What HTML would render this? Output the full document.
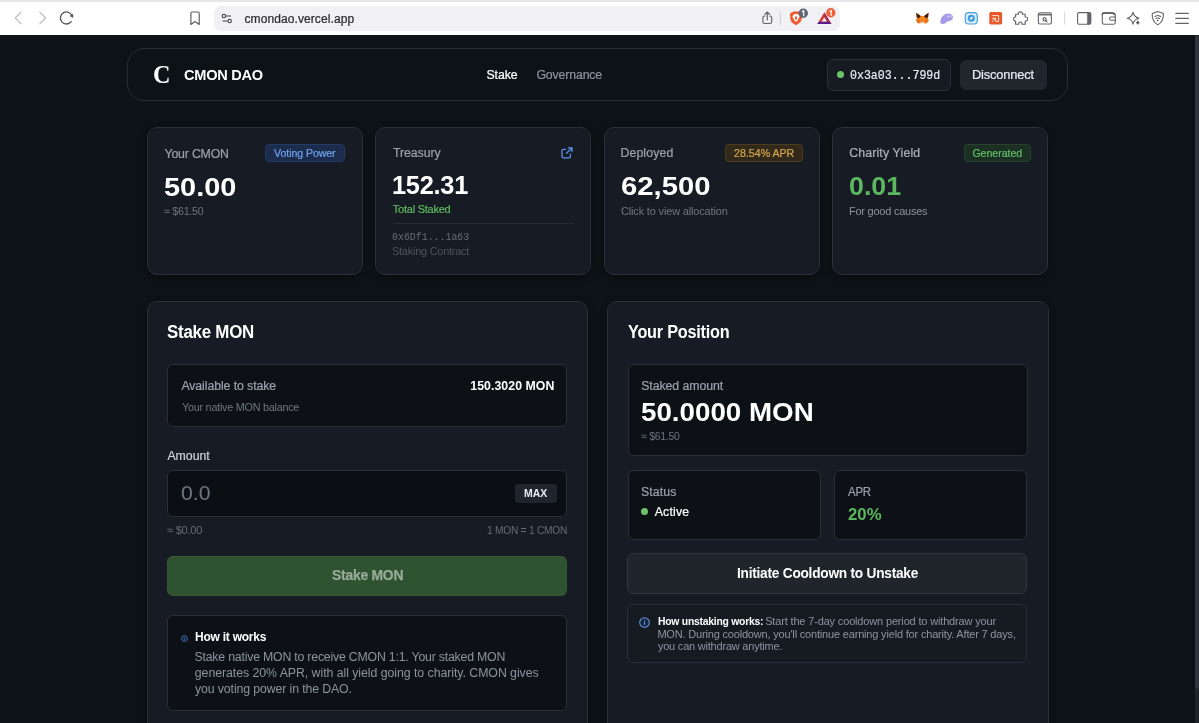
<!DOCTYPE html>
<html>
<head>
<meta charset="utf-8">
<title>CMON DAO</title>
<style>
*{box-sizing:border-box;margin:0;padding:0}
html,body{width:1199px;height:723px;overflow:hidden;background:#0d1216;font-family:"Liberation Sans",sans-serif;}
body{position:relative;color:#fff}
.abs{position:absolute}
.t{position:absolute;white-space:nowrap;line-height:1}
.mono{font-family:"Liberation Mono",monospace}
.serif{font-family:"Liberation Serif",serif}
.b{font-weight:bold}
.m{-webkit-text-stroke:0.22px currentColor}
/* browser chrome */
#chrome{position:absolute;left:0;top:0;width:1199px;height:35px;background:#fff}
#topstrip{position:absolute;left:0;top:0;width:1199px;height:2px;background:#e6e6ea}
#urlbar{position:absolute;left:214px;top:6px;width:626px;height:25px;border-radius:7px;background:#f0f0f5}
#chrome svg{position:absolute;overflow:visible}
/* nav */
#nav{position:absolute;left:127px;top:48.4px;width:941px;height:52.8px;border:1px solid #282d35;border-radius:17px;background:#0d1216}
.card{position:absolute;top:127px;width:216px;height:147.6px;background:#171b23;border:1px solid #2a2f38;border-radius:10px;box-shadow:0 2px 6px rgba(0,0,0,0.35)}
.panel{position:absolute;top:300.6px;width:442px;height:440px;background:#171b23;border:1px solid #2a2f38;border-radius:10px;box-shadow:0 2px 6px rgba(0,0,0,0.35)}
.box{position:absolute;background:#0d1116;border:1px solid #292e37;border-radius:6px}
.badge{position:absolute;height:18px;border-radius:4px;font-size:11px;line-height:16px;text-align:center;white-space:nowrap}
</style>
</head>
<body>
<div id="root" style="position:absolute;left:0;top:0;width:1199px;height:723px;will-change:transform">
<!-- ================= BROWSER CHROME ================= -->
<div id="chrome">
  <div id="topstrip"></div>
  <div id="urlbar"></div>
  <div class="t m" id="url" style="left:244.5px;top:11.6px;font-size:12px;line-height:15px;color:#2b2b2f;letter-spacing:0;letter-spacing:0.09px">cmondao.vercel.app</div>
  <svg id="chromeIcons" style="left:0;top:0" width="1199" height="35" viewBox="0 0 1199 35" fill="none" stroke-linecap="round" stroke-linejoin="round">
  <!-- back / forward -->
  <path d="M21 12.2 L15.2 18 L21 23.8" stroke="#c3c3c6" stroke-width="1.3"/>
  <path d="M39.8 12.2 L45.6 18 L39.8 23.8" stroke="#c3c3c6" stroke-width="1.3"/>
  <!-- reload -->
  <path d="M72.2 16.4 A6 6 0 1 0 71.2 21.6" stroke="#55565b" stroke-width="1.3"/>
  <path d="M70.3 15.8 L72.9 14.2 L72.9 17.3 Z" fill="#55565b" stroke="#55565b" stroke-width="0.6"/>
  <!-- bookmark -->
  <path d="M190.9 13.2 Q190.9 12 192.1 12 L198 12 Q199.2 12 199.2 13.2 L199.2 24.4 L195.05 21.6 L190.9 24.4 Z" stroke="#5a5b60" stroke-width="1.15"/>
  <!-- tune -->
  <circle cx="223.9" cy="16" r="1.7" stroke="#3a3a3f" stroke-width="1.05"/>
  <path d="M226.4 16 H230.6" stroke="#3a3a3f" stroke-width="1.1"/>
  <circle cx="229.7" cy="21" r="1.7" stroke="#3a3a3f" stroke-width="1.05"/>
  <path d="M223 21 H227.2" stroke="#3a3a3f" stroke-width="1.1"/>
  <!-- share -->
  <path d="M765 16 H764.6 Q762.9 16 762.9 17.7 V21.8 Q762.9 23.5 764.6 23.5 H770 Q771.7 23.5 771.7 21.8 V17.7 Q771.7 16 770 16 H769.6" stroke="#636469" stroke-width="1.15"/>
  <path d="M767.3 20 V12.2 M764.9 14.4 L767.3 12 L769.7 14.4" stroke="#636469" stroke-width="1.15"/>
  <!-- separator -->
  <path d="M780.3 12.2 V24" stroke="#cfcfd4" stroke-width="1"/>
  <!-- brave lion -->
  <path d="M793.2 11.4 L798.8 11.4 L800 12.8 L801.4 12.6 L802.2 15 L801.6 16.4 L802 18 L800.4 22.2 L796 25.2 L791.6 22.2 L790 18 L790.4 16.4 L789.8 15 L790.6 12.6 L792 12.8 Z" fill="#f1562b" stroke="none"/>
  <path d="M793.6 14.4 L796 13.8 L798.4 14.4 L799.6 16.6 L798.2 19.4 L796 22.2 L793.8 19.4 L792.4 16.6 Z" fill="#fff" stroke="none"/>
  <path d="M796 15.6 L797.2 17.8 L796 21 L794.8 17.8 Z" fill="#f1562b" stroke="none"/>
  <circle cx="803.3" cy="13.2" r="4.7" fill="#5e6573" stroke="none"/>
  <path d="M802.4 11.6 L803.7 10.7 V15.8" stroke="#fff" stroke-width="1.2"/>
  <!-- BAT triangle -->
  <path d="M824.3 16.6 L827.6 22 L821 22 Z" fill="#fdf6f6" stroke="none"/>
  <path d="M824.3 12.2 L817.4 24 L831.4 24 Z M824.3 17.2 L827 21.7 L821.6 21.7 Z" fill="#d8372e" fill-rule="evenodd" stroke="none"/>
  <path d="M817.4 24 L831.4 24 L830 21.7 L818.8 21.7 Z" fill="#5a1d8c" stroke="none"/>
  <path d="M824.3 12.2 L831.4 24 L828.6 22.6 L824.3 16.4 Z" fill="#9c2a66" stroke="none"/>
  <circle cx="830.8" cy="12.8" r="4.7" fill="#ef5f38" stroke="none"/>
  <path d="M829.9 11.2 L831.2 10.3 V15.4" stroke="#fff" stroke-width="1.2"/>
  <!-- metamask fox -->
  <path d="M916.2 12.8 L920.6 16 L924.2 16 L928.6 12.8 L928 18.4 L928.6 21 L926.2 23.6 L922.4 22.8 L918.4 23.6 L916.2 21 L916.8 18.4 Z" fill="#f5841f" stroke="none"/>
  <path d="M916.2 12.8 L920.8 16 L919.2 18 L916.8 17.6 Z" fill="#3b1d12" stroke="none"/>
  <path d="M928.6 12.8 L924 16 L925.6 18 L928 17.6 Z" fill="#3b1d12" stroke="none"/>
  <path d="M920.4 21.6 L922.4 22.2 L924.4 21.6 L923.8 23.4 L921 23.4 Z" fill="#e4d4c8" stroke="none"/>
  <path d="M916.8 18.4 L919.6 19 L920.4 21.6 L918.4 23.6 L916.2 21 Z M928 18.4 L925.2 19 L924.4 21.6 L926.2 23.6 L928.6 21 Z" fill="#e2761b" stroke="none"/>
  <!-- purple ghost -->
  <path d="M940.3 22.8 C940 18 943.4 13.5 948.4 13.4 C951.4 13.4 953 15.2 953 17.3 C953 19.7 951 21 949 21 C947.6 21 946.8 22.2 945.6 23 C944 24.1 940.6 24.5 940.3 22.8 Z" fill="#a79ae6" stroke="none"/>
  <circle cx="948.4" cy="16.4" r="0.85" fill="#ece9fb" stroke="none"/>
  <circle cx="951" cy="16.2" r="0.75" fill="#ece9fb" stroke="none"/>
  <!-- blue rounded square -->
  <rect x="965.3" y="12.6" width="12" height="11.4" rx="3.2" fill="#d9ecf9" stroke="#4b9fdd" stroke-width="1.2"/>
  <circle cx="971.3" cy="18.3" r="3.5" fill="#3f9be0" stroke="none"/>
  <path d="M969.4 20 L970.6 17.6 L973.2 16.6 L972 19 Z" fill="#fff" stroke="none"/>
  <!-- orange square -->
  <rect x="989.3" y="12" width="12.8" height="12.4" rx="1.6" fill="#e8582a" stroke="none"/>
  <path d="M992.6 15.6 H998.6 V21.4 H995.6 V18.4 H992.4 M995.4 18.6 L992.2 21.6" stroke="#fbe3d9" stroke-width="1"/>
  <!-- puzzle -->
  <path d="M1018.4 14.2 Q1018.2 11.8 1020.4 11.8 Q1022.6 11.8 1022.4 14.2 L1025.2 14.2 L1025.2 17 Q1027.6 16.8 1027.6 19 Q1027.6 21.2 1025.2 21 L1025.2 24.2 L1022 24.2 Q1022.2 22 1020.4 22 Q1018.6 22 1018.8 24.2 L1015.6 24.2 L1015.6 21 Q1013.6 21.2 1013.6 19 Q1013.6 16.8 1015.6 17 L1015.6 14.2 Z" stroke="#636469" stroke-width="1.15"/>
  <!-- tab search -->
  <rect x="1038.4" y="12.8" width="13" height="11.2" rx="1.4" stroke="#6e6f75" stroke-width="1.2"/>
  <path d="M1038.4 14.8 H1051.4" stroke="#6e6f75" stroke-width="1.6"/>
  <circle cx="1044.6" cy="19.4" r="1.6" stroke="#4a4b50" stroke-width="1.1"/>
  <path d="M1045.8 20.6 L1047 21.8" stroke="#4a4b50" stroke-width="1.1"/>
  <!-- separator -->
  <path d="M1064.7 12.2 V24" stroke="#d4d4d8" stroke-width="1"/>
  <!-- sidebar -->
  <rect x="1077.6" y="12.6" width="13.2" height="11.6" rx="1.4" stroke="#636469" stroke-width="1.1"/>
  <path d="M1087.8 12.8 H1089.4 Q1090.6 12.8 1090.6 14 V22.8 Q1090.6 24 1089.4 24 H1087.8 Z" fill="#636469" stroke="#636469" stroke-width="0.8"/>
  <!-- wallet -->
  <path d="M1102.3 14.4 Q1102.3 12.8 1103.9 12.8 H1112.4 Q1114 12.8 1114 14.4" stroke="#6e6f75" stroke-width="1.6"/>
  <rect x="1102.3" y="13.4" width="13" height="10.8" rx="1.6" stroke="#636469" stroke-width="1.1"/>
  <path d="M1115.3 17 H1111 Q1109.6 17 1109.6 18.4 V18.8 Q1109.6 20.2 1111 20.2 H1115.3" stroke="#636469" stroke-width="1.1"/>
  <!-- sparkle (Leo) -->
  <path d="M1133 12.2 Q1134 17.2 1139 18.2 Q1134 19.2 1133 24.2 Q1132 19.2 1127.2 18.2 Q1132 17.2 1133 12.2 Z" stroke="#636469" stroke-width="1.1"/>
  <path d="M1137.8 20.8 Q1138.05 22.4 1139.6 22.7 Q1138.05 23 1137.8 24.6 Q1137.55 23 1136 22.7 Q1137.55 22.4 1137.8 20.8 Z" fill="#4a4b50" stroke="#4a4b50" stroke-width="0.4"/>
  <!-- vpn shield -->
  <path d="M1157.8 11.4 L1163.4 13.4 Q1163.8 21.6 1157.8 24.8 Q1151.8 21.6 1152.2 13.4 Z" stroke="#636469" stroke-width="1.1"/>
  <path d="M1154.8 16.4 Q1157.8 14.2 1160.8 16.4 M1155.8 18.4 Q1157.8 17 1159.8 18.4" stroke="#55565b" stroke-width="1"/>
  <circle cx="1157.8" cy="20.4" r="0.8" fill="#55565b" stroke="none"/>
  <!-- hamburger -->
  <path d="M1175.8 13.4 H1188.4 M1175.8 18.4 H1188.4 M1175.8 23.4 H1188.4" stroke="#636469" stroke-width="1.15"/>
</svg>
</div>

<!-- scrollbar -->
<div class="abs" id="sbTrack" style="left:1195px;top:35px;width:4px;height:688px;background:#1f232a"></div>
<div class="abs" id="sbThumb" style="left:1195px;top:35.5px;width:4px;height:653px;background:#31353d;border-radius:0 0 2px 2px"></div>
<!-- ================= NAV ================= -->
<div id="nav"></div>
<div class="t serif b" id="logoC" style="left:153px;top:61px;font-size:26px;line-height:27px;color:#fff;transform-origin:0 0;transform:scaleX(0.93)">C</div>
<div class="t b" id="brand" style="left:183.7px;top:66.0px;font-size:15px;line-height:18px;letter-spacing:-0.25px;transform-origin:0 0;transform:scaleX(0.9707)">CMON DAO</div>
<div class="t m" id="navStake" style="left:486.5px;top:68.0px;font-size:12.3px;line-height:15px;color:#fff;letter-spacing:-0.09px">Stake</div>
<div class="t m" id="navGov" style="left:536.4px;top:68.0px;font-size:12.3px;line-height:15px;color:#8b949e;letter-spacing:-0.13px">Governance</div>
<div class="abs" id="addrBox" style="left:827px;top:59px;width:124px;height:32px;border-radius:6px;background:#161b22;border:1px solid #2a3038"></div>
<div class="abs" id="addrDot" style="left:837px;top:71px;width:7px;height:7px;border-radius:50%;background:#6cc36c"></div>
<div class="t mono m" id="addr" style="left:850.0px;top:68.7px;font-size:13.4px;line-height:13px;color:#e6edf3;transform-origin:0 0;transform:scaleX(0.8639)">0x3a03...799d</div>
<div class="abs" id="discBtn" style="left:960px;top:60px;width:87px;height:30px;border-radius:6px;background:#21262d"></div>
<div class="t m" id="disc" style="left:971.9px;top:67.3px;font-size:12.8px;line-height:15px;color:#e6edf3;letter-spacing:-0.13px">Disconnect</div>

<!-- ================= STAT CARDS ================= -->
<div class="card" id="card1" style="left:147px"></div>
<div class="card" id="card2" style="left:375px"></div>
<div class="card" id="card3" style="left:604px"></div>
<div class="card" id="card4" style="left:832px"></div>

<!-- card 1 -->
<div class="t m" id="c1lab" style="left:164.5px;top:146.6px;font-size:12.3px;line-height:15px;color:#9aa1ab;letter-spacing:-0.17px">Your CMON</div>
<div class="badge" id="c1badge" style="left:265px;top:144px;width:80px;background:#1b2c4d;border:1px solid #223a66"></div>
<div class="t m" id="c1bt" style="left:274.1px;top:146.8px;font-size:10.6px;line-height:13px;color:#6fa0ea;letter-spacing:-0.08px">Voting Power</div>
<div class="t b" id="c1val" style="left:163.8px;top:172.6px;font-size:25.4px;line-height:28px;transform-origin:0 0;transform:scaleX(1.1383)">50.00</div>
<div class="t" id="c1sub" style="left:163.5px;top:204.7px;font-size:11px;line-height:13px;color:#6e7681;letter-spacing:-0.25px;transform-origin:0 0;transform:scaleX(0.968)">≈ $61.50</div>

<!-- card 2 -->
<div class="t m" id="c2lab" style="left:392.9px;top:145.7px;font-size:12.3px;line-height:15px;color:#9aa1ab;letter-spacing:-0.04px">Treasury</div>
<svg class="abs" id="extIc" style="left:561px;top:146.5px;overflow:visible" width="12" height="12" viewBox="0 0 12 12" fill="none" stroke="#5d8fea" stroke-width="1.3" stroke-linecap="round" stroke-linejoin="round"><path d="M4.6 2.4 H2.4 Q1 2.4 1 3.8 V9.4 Q1 10.8 2.4 10.8 H8 Q9.4 10.8 9.4 9.4 V7.2"/><path d="M7.2 0.8 H11 V4.6 M11 0.8 L5.6 6.2"/></svg>
<div class="t b" id="c2val" style="left:392.0px;top:170.7px;font-size:25.4px;line-height:28px;letter-spacing:-0.25px;transform-origin:0 0;transform:scaleX(0.999)">152.31</div>
<div class="t m" id="c2sub" style="left:392.8px;top:203.2px;font-size:11px;line-height:13px;color:#5cb85f;letter-spacing:-0.24px">Total Staked</div>
<div class="abs" id="c2div" style="left:393px;top:222.5px;width:181px;height:1px;background:#262c35"></div>
<div class="t mono" id="c2addr" style="left:392.4px;top:230.7px;font-size:10.8px;line-height:12px;color:#666d77;transform-origin:0 0;transform:scaleX(0.9169)">0x6Df1...1a63</div>
<div class="t" id="c2sc" style="left:392.3px;top:244.6px;font-size:11px;line-height:13px;color:#4d545e;letter-spacing:-0.25px;transform-origin:0 0;transform:scaleX(0.9975)">Staking Contract</div>

<!-- card 3 -->
<div class="t m" id="c3lab" style="left:620.4px;top:146.4px;font-size:12.3px;line-height:15px;color:#9aa1ab;letter-spacing:0.14px">Deployed</div>
<div class="badge" id="c3badge" style="left:725px;top:144px;width:78px;background:#33291a;border:1px solid #4d3c1e"></div>
<div class="t m" id="c3bt" style="left:734.1px;top:146.7px;font-size:10.6px;line-height:13px;color:#d1a54c;letter-spacing:0.01px">28.54% APR</div>
<div class="t b" id="c3val" style="left:621.3px;top:172.3px;font-size:25.4px;line-height:28px;transform-origin:0 0;transform:scaleX(1.1515)">62,500</div>
<div class="t" id="c3sub" style="left:621.0px;top:205.0px;font-size:11px;line-height:13px;color:#6e7681;letter-spacing:-0.17px">Click to view allocation</div>

<!-- card 4 -->
<div class="t m" id="c4lab" style="left:849.2px;top:146.4px;font-size:12.3px;line-height:15px;color:#a9b0b9;letter-spacing:0.16px">Charity Yield</div>
<div class="badge" id="c4badge" style="left:964px;top:144px;width:67px;background:#1b3023;border:1px solid #26422f"></div>
<div class="t m" id="c4bt" style="left:972.4px;top:146.7px;font-size:10.6px;line-height:13px;color:#62bb66;letter-spacing:-0.04px">Generated</div>
<div class="t b" id="c4val" style="left:849.2px;top:172.3px;font-size:25.4px;line-height:28px;color:#5cb860;transform-origin:0 0;transform:scaleX(1.0564)">0.01</div>
<div class="t" id="c4sub" style="left:849.0px;top:205.0px;font-size:11px;line-height:13px;color:#8b949e;letter-spacing:-0.24px">For good causes</div>

<!-- ================= PANELS ================= -->
<div class="panel" id="panelL" style="left:147px;width:441px"></div>
<div class="panel" id="panelR" style="left:607px"></div>
<!-- left panel -->
<div class="t b" id="lTitle" style="left:167.1px;top:322.3px;font-size:17.5px;line-height:20px;letter-spacing:-0.25px;transform-origin:0 0;transform:scaleX(0.9659)">Stake MON</div>
<div class="box" id="lBox1" style="left:167px;top:363.6px;width:400px;height:63px"></div>
<div class="t m" id="lAvail" style="left:181.4px;top:379.2px;font-size:12.3px;line-height:15px;color:#9aa1ab;letter-spacing:-0.08px">Available to stake</div>
<div class="t b" id="lBal" style="left:470.3px;top:379.0px;font-size:12.3px;line-height:15px;color:#fff;letter-spacing:0.06px">150.3020 MON</div>
<div class="t" id="lNative" style="left:181.5px;top:400.5px;font-size:11px;line-height:13px;color:#6e7681;letter-spacing:-0.25px;transform-origin:0 0;transform:scaleX(0.9827)">Your native MON balance</div>
<div class="t m" id="lAmount" style="left:167.4px;top:448.7px;font-size:12.3px;line-height:15px;color:#c9d1d9;letter-spacing:-0.01px">Amount</div>
<div class="box" id="lInput" style="left:167px;top:469.5px;width:400px;height:47px;background:#0b0e13"></div>
<div class="t" id="lZero" style="left:180.9px;top:482.2px;font-size:20px;line-height:22px;color:#6e7681;transform-origin:0 0;transform:scaleX(1.061)">0.0</div>
<div class="abs" id="lMaxBtn" style="left:514.7px;top:483.6px;width:42.7px;height:19.3px;border-radius:4px;background:#20242c"></div>
<div class="t b" id="lMax" style="left:524.3px;top:487.7px;font-size:10.2px;line-height:12px;color:#e6edf3;transform-origin:0 0;transform:scaleX(1.0307)">MAX</div>
<div class="t" id="lUsd" style="left:167.1px;top:523.8px;font-size:11px;line-height:13px;color:#656c76;letter-spacing:-0.23px">≈ $0.00</div>
<div class="t" id="lRate" style="left:486.9px;top:523.6px;font-size:11px;line-height:13px;color:#656c76;letter-spacing:-0.25px;transform-origin:0 0;transform:scaleX(0.9238)">1 MON = 1 CMON</div>
<div class="abs" id="lStakeBtn" style="left:167px;top:555.5px;width:400px;height:40px;border-radius:6px;background:#2f5231;border:1px solid #335536;border-top-color:#3a5d3d"></div>
<div class="t b" id="lStake" style="left:331.7px;top:567.0px;font-size:14px;line-height:17px;color:#96ab98;-webkit-text-stroke:0.25px #96ab98;letter-spacing:-0.25px;transform-origin:0 0;transform:scaleX(0.9933)">Stake MON</div>
<div class="box" id="lInfo" style="left:167px;top:615px;width:400px;height:95.5px"></div>
<svg class="abs" id="lInfoIc" style="left:181.2px;top:635.3px" width="7" height="7" viewBox="0 0 7 7"><circle cx="3.5" cy="3.5" r="2.9" fill="#13203a" stroke="#4870b4" stroke-width="0.9"/><rect x="3.1" y="3.1" width="0.8" height="1.6" fill="#4870b4"/><rect x="3.1" y="2" width="0.8" height="0.7" fill="#4870b4"/></svg>
<div class="t b" id="lHow" style="left:194.6px;top:629.8px;font-size:12.3px;line-height:15px;color:#fff;letter-spacing:-0.25px;transform-origin:0 0;transform:scaleX(0.9769)">How it works</div>
<div class="t" id="lL1" style="left:194.5px;top:649.7px;font-size:12.3px;line-height:15px;color:#8b949e;letter-spacing:-0.2px">Stake native MON to receive CMON 1:1. Your staked MON</div>
<div class="t" id="lL2" style="left:194.8px;top:665.9px;font-size:12.3px;line-height:15px;color:#8b949e;letter-spacing:-0.04px">generates 20% APR, with all yield going to charity. CMON gives</div>
<div class="t" id="lL3" style="left:195.0px;top:682.0px;font-size:12.3px;line-height:15px;color:#8b949e;letter-spacing:-0.11px">you voting power in the DAO.</div>

<!-- right panel -->
<div class="t b" id="rTitle" style="left:627.5px;top:322.3px;font-size:17.5px;line-height:20px;letter-spacing:-0.25px;transform-origin:0 0;transform:scaleX(0.929)">Your Position</div>
<div class="box" id="rBox1" style="left:627.5px;top:363.6px;width:400px;height:92px"></div>
<div class="t m" id="rStaked" style="left:641.2px;top:379.1px;font-size:12.3px;line-height:15px;color:#9aa1ab;letter-spacing:-0.06px">Staked amount</div>
<div class="t b" id="rVal" style="left:641.2px;top:398.6px;font-size:25.4px;line-height:27px;transform-origin:0 0;transform:scaleX(1.0926)">50.0000 MON</div>
<div class="t" id="rUsd" style="left:641.4px;top:430.0px;font-size:11px;line-height:13px;color:#6e7681;letter-spacing:-0.25px;transform-origin:0 0;transform:scaleX(0.9485)">≈ $61.50</div>
<div class="box" id="rStatusBox" style="left:627.5px;top:469.6px;width:193.4px;height:70px"></div>
<div class="box" id="rAprBox" style="left:834.2px;top:469.6px;width:193.3px;height:70px"></div>
<div class="t m" id="rStatus" style="left:640.9px;top:485.4px;font-size:12.3px;line-height:15px;color:#9aa1ab;letter-spacing:0.11px">Status</div>
<div class="abs" id="rDot" style="left:641.4px;top:508px;width:7px;height:7px;border-radius:50%;background:#6cc36c"></div>
<div class="t m" id="rActive" style="left:654.7px;top:504.8px;font-size:12.3px;line-height:15px;color:#fff;letter-spacing:0.19px">Active</div>
<div class="t m" id="rApr" style="left:848.1px;top:485.4px;font-size:12.3px;line-height:15px;color:#9aa1ab;letter-spacing:-0.25px;transform-origin:0 0;transform:scaleX(0.9289)">APR</div>
<div class="t b" id="rAprVal" style="left:847.9px;top:506.3px;font-size:15.6px;line-height:18px;color:#5cb860;transform-origin:0 0;transform:scaleX(1.074)">20%</div>
<div class="abs" id="rBtn" style="left:627.3px;top:553px;width:400px;height:40.6px;border-radius:6px;background:#20252c;border:1px solid #30353e"></div>
<div class="t b" id="rBtnT" style="left:736.7px;top:564.8px;font-size:14.2px;line-height:17px;color:#fff;letter-spacing:-0.25px;transform-origin:0 0;transform:scaleX(0.9647)">Initiate Cooldown to Unstake</div>
<div class="box" id="rInfo" style="left:627.3px;top:603.5px;width:400.2px;height:59.8px;background:#161b22;border-color:#2a3039"></div>
<svg class="abs" id="rInfoIc" style="left:639.3px;top:617px" width="11" height="11" viewBox="0 0 11 11"><circle cx="5.5" cy="5.5" r="4.8" fill="#172643" stroke="#6a96dd" stroke-width="1.05"/><rect x="5" y="5" width="1" height="2.7" fill="#7aa5ea"/><rect x="5" y="3.2" width="1" height="1" fill="#7aa5ea"/></svg>
<div class="t b" id="rHow" style="left:657.6px;top:614.6px;font-size:11px;line-height:13px;color:#fff;letter-spacing:-0.25px;transform-origin:0 0;transform:scaleX(0.9423)">How unstaking works:</div>
<div class="t" id="rL1" style="left:765.2px;top:614.8px;font-size:11px;line-height:13px;color:#8b949e;letter-spacing:-0.16px">Start the 7-day cooldown period to withdraw your</div>
<div class="t" id="rL2" style="left:657.4px;top:627.6px;font-size:11px;line-height:13px;color:#8b949e;letter-spacing:-0.18px">MON. During cooldown, you'll continue earning yield for charity. After 7 days,</div>
<div class="t" id="rL3" style="left:657.9px;top:640.2px;font-size:11px;line-height:13px;color:#8b949e;letter-spacing:-0.21px">you can withdraw anytime.</div>

</div>
</body>
</html>
